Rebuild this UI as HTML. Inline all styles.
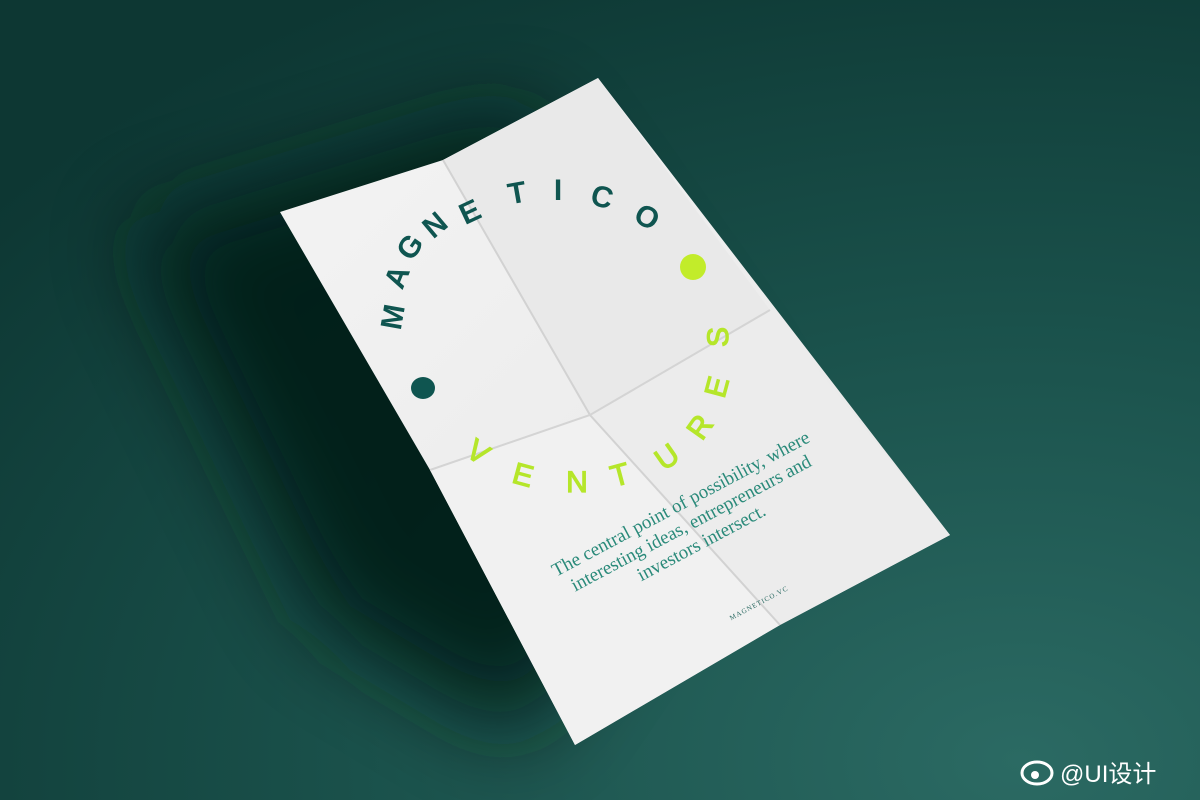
<!DOCTYPE html>
<html><head><style>
html,body{margin:0;padding:0;width:1200px;height:800px;overflow:hidden}
</style></head><body>
<svg width="1200" height="800" viewBox="0 0 1200 800" xmlns="http://www.w3.org/2000/svg">
<defs>
<radialGradient id="bg" cx="85%" cy="95%" r="110%">
<stop offset="0" stop-color="#2b6a63"/>
<stop offset="0.5" stop-color="#1a514b"/>
<stop offset="1" stop-color="#0d3733"/>
</radialGradient>
<filter id="blur" x="-50%" y="-50%" width="200%" height="200%"><feGaussianBlur stdDeviation="45"/></filter>
<linearGradient id="p1" x1="0" y1="0" x2="1" y2="1">
<stop offset="0" stop-color="#f4f4f4"/><stop offset="1" stop-color="#e6e6e6"/>
</linearGradient>
</defs>
<rect width="1200" height="800" fill="url(#bg)"/>
<path d="M130 230 L520 110 L740 420 L520 740 L320 620 Z" fill="#031a17" opacity="0.9" filter="url(#blur)"/>
<path d="M280 212 L443 160 L598 78 L950 535 L780 625 L575 745 L430 470 Z" fill="url(#p1)"/>
<path d="M443 160 L598 78 L770 310 L590 415 Z" fill="#e9e9e9"/>
<path d="M590 415 L770 310 L950 535 L780 625 Z" fill="#ececec"/>
<path d="M430 470 L590 415 L780 625 L575 745 Z" fill="#f1f1f1"/>
<path d="M443 160 L590 415 L780 625" stroke="#d2d2d2" stroke-width="2" fill="none"/>
<path d="M430 470 L590 415 L770 310" stroke="#d4d4d4" stroke-width="2" fill="none"/>
<g font-family="Liberation Sans, sans-serif" font-weight="bold" font-size="30" text-anchor="middle" fill="#0f5550">
<text transform="translate(393,317) rotate(-80)" dy="10">M</text>
<text transform="translate(397,277) rotate(-68)" dy="10">A</text>
<text transform="translate(410,247) rotate(-55)" dy="10">G</text>
<text transform="translate(435,225) rotate(-40)" dy="10">N</text>
<text transform="translate(470,212) rotate(-25)" dy="10">E</text>
<text transform="translate(517,193) rotate(-10)" dy="10">T</text>
<text transform="translate(558,190) rotate(0)" dy="10">I</text>
<text transform="translate(602,197) rotate(15)" dy="10">C</text>
<text transform="translate(647,217) rotate(30)" dy="10">O</text>
</g>
<g font-family="Liberation Sans, sans-serif" font-size="30" text-anchor="middle" fill="#b5e62a" stroke="#b5e62a" stroke-width="1.2">
<text transform="translate(478,452) rotate(35)" dy="10">V</text>
<text transform="translate(523,475) rotate(15)" dy="10">E</text>
<text transform="translate(577,482) rotate(0)" dy="10">N</text>
<text transform="translate(620,475) rotate(-15)" dy="10">T</text>
<text transform="translate(667,457) rotate(-35)" dy="10">U</text>
<text transform="translate(700,427) rotate(-55)" dy="10">R</text>
<text transform="translate(717,387) rotate(-75)" dy="10">E</text>
<text transform="translate(718,337) rotate(-90)" dy="10">S</text>
</g>
<ellipse cx="423" cy="388" rx="12" ry="11" fill="#0f5550"/>
<circle cx="693" cy="267" r="13" fill="#c2ec2a"/>
<g font-family="Liberation Serif, serif" font-size="19" fill="#2a8a7a" text-anchor="middle" transform="translate(692,525) rotate(-28)">
<text x="0" y="-18">The central point of possibility, where</text>
<text x="0" y="4">interesting ideas, entrepreneurs and</text>
<text x="0" y="26">investors intersect.</text>
</g>
<text transform="translate(760,605) rotate(-28)" font-family="Liberation Serif, serif" font-size="7" fill="#2a6a62" text-anchor="middle" letter-spacing="1">MAGNETICO.VC</text>
<g fill="#fff" font-family="Liberation Sans, 'Noto Sans CJK SC', sans-serif" font-size="24">
<ellipse cx="1037" cy="773" rx="15" ry="11" fill="none" stroke="#fff" stroke-width="3"/>
<circle cx="1035" cy="775" r="4"/>
<text x="1060" y="782">@UI设计</text>
</g>
</svg>
</body></html>
